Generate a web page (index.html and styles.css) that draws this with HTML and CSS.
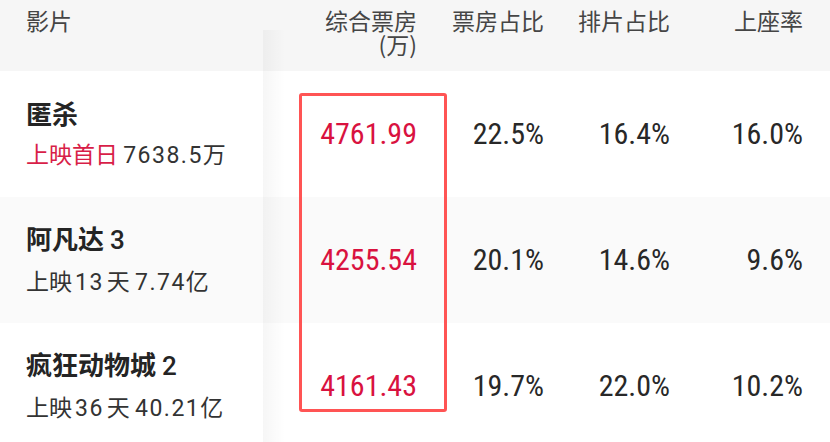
FILE: index.html
```html
<!DOCTYPE html>
<html lang="zh-CN">
<head>
<meta charset="utf-8">
<title>票房</title>
<link rel="stylesheet" href="styles.css">
</head>
<body>
<div class="table">
  <div class="row head">
    <div class="cell film-h">影片</div>
    <div class="cell num c2"><div>综合票房</div><div>(万)</div></div>
    <div class="cell num">票房占比</div>
    <div class="cell num">排片占比</div>
    <div class="cell num">上座率</div>
  </div>
  <div class="row">
    <div class="cell film">
      <div class="title">匿杀</div>
      <div class="sub"><span class="hot">上映首日</span> <span class="d">7638.5</span>万</div>
    </div>
    <div class="cell num c2 val red">4761.99</div>
    <div class="cell num val">22.5%</div>
    <div class="cell num val">16.4%</div>
    <div class="cell num val">16.0%</div>
  </div>
  <div class="row alt">
    <div class="cell film">
      <div class="title">阿凡达<span class="tn">3</span></div>
      <div class="sub">上映<span class="d gap">13</span>天 <span class="d">7.74</span>亿</div>
    </div>
    <div class="cell num c2 val red">4255.54</div>
    <div class="cell num val">20.1%</div>
    <div class="cell num val">14.6%</div>
    <div class="cell num val">9.6%</div>
  </div>
  <div class="row">
    <div class="cell film">
      <div class="title">疯狂动物城<span class="tn">2</span></div>
      <div class="sub">上映<span class="d gap">36</span>天 <span class="d">40.21</span>亿</div>
    </div>
    <div class="cell num c2 val red">4161.43</div>
    <div class="cell num val">19.7%</div>
    <div class="cell num val">22.0%</div>
    <div class="cell num val">10.2%</div>
  </div>
  <div class="shade"></div>
  <div class="highlight"></div>
</div>
</body>
</html>
```

FILE: styles.css
```css
html, body {
  margin: 0;
  padding: 0;
  background: #ffffff;
}

body {
  font-family: "Noto Sans CJK SC", "Noto Sans", sans-serif;
}

.table {
  position: relative;
  width: 830px;
  height: 442px;
  overflow: hidden;
}

.row {
  display: grid;
  grid-template-columns: 263px 184px 124px 126px 133px;
  align-items: center;
  height: 126px;
  background: #ffffff;
}

.row.alt {
  background: #fafafa;
}

.row.head {
  height: 71px;
  box-sizing: border-box;
  padding-top: 7px;
  align-items: start;
  background: #f6f6f6;
  font-size: 23px;
  line-height: 26px;
  color: #454545;
}

.head .c2 div + div {
  margin-top: -2px;
}

.cell.num {
  text-align: right;
  padding-right: 27px;
}

.cell.c2 {
  padding-right: 30px;
}

.film-h,
.film {
  padding-left: 26px;
}

.film {
  display: flex;
  flex-direction: column;
  gap: 10px;
}

.title {
  font-size: 26px;
  line-height: 30px;
  font-weight: 700;
  color: #242424;
}

.tn {
  font-family: "Roboto", sans-serif;
  font-weight: 500;
  margin-left: 6px;
}

.sub {
  font-size: 23px;
  line-height: 30px;
  color: #333333;
  white-space: nowrap;
}

.sub .hot {
  color: #d81e48;
}

.sub .d {
  font-family: "Roboto", sans-serif;
  letter-spacing: 1.5px;
}

.sub .gap {
  margin: 0 3px;
}

.val {
  font-family: "Liberation Sans Narrow", "Roboto Condensed", "DejaVu Sans Condensed", sans-serif;
  font-size: 30px;
  line-height: 36px;
  color: #282828;
}

.val.red {
  color: #d9123f;
}

.shade {
  position: absolute;
  left: 263px;
  top: 30px;
  width: 22px;
  bottom: 0;
  background: linear-gradient(to right, rgba(0, 0, 0, 0.035), rgba(0, 0, 0, 0));
  pointer-events: none;
}

.highlight {
  position: absolute;
  left: 299px;
  top: 93px;
  width: 148px;
  height: 319px;
  box-sizing: border-box;
  border: 3px solid #ff5454;
  border-radius: 3px;
  pointer-events: none;
}
```
